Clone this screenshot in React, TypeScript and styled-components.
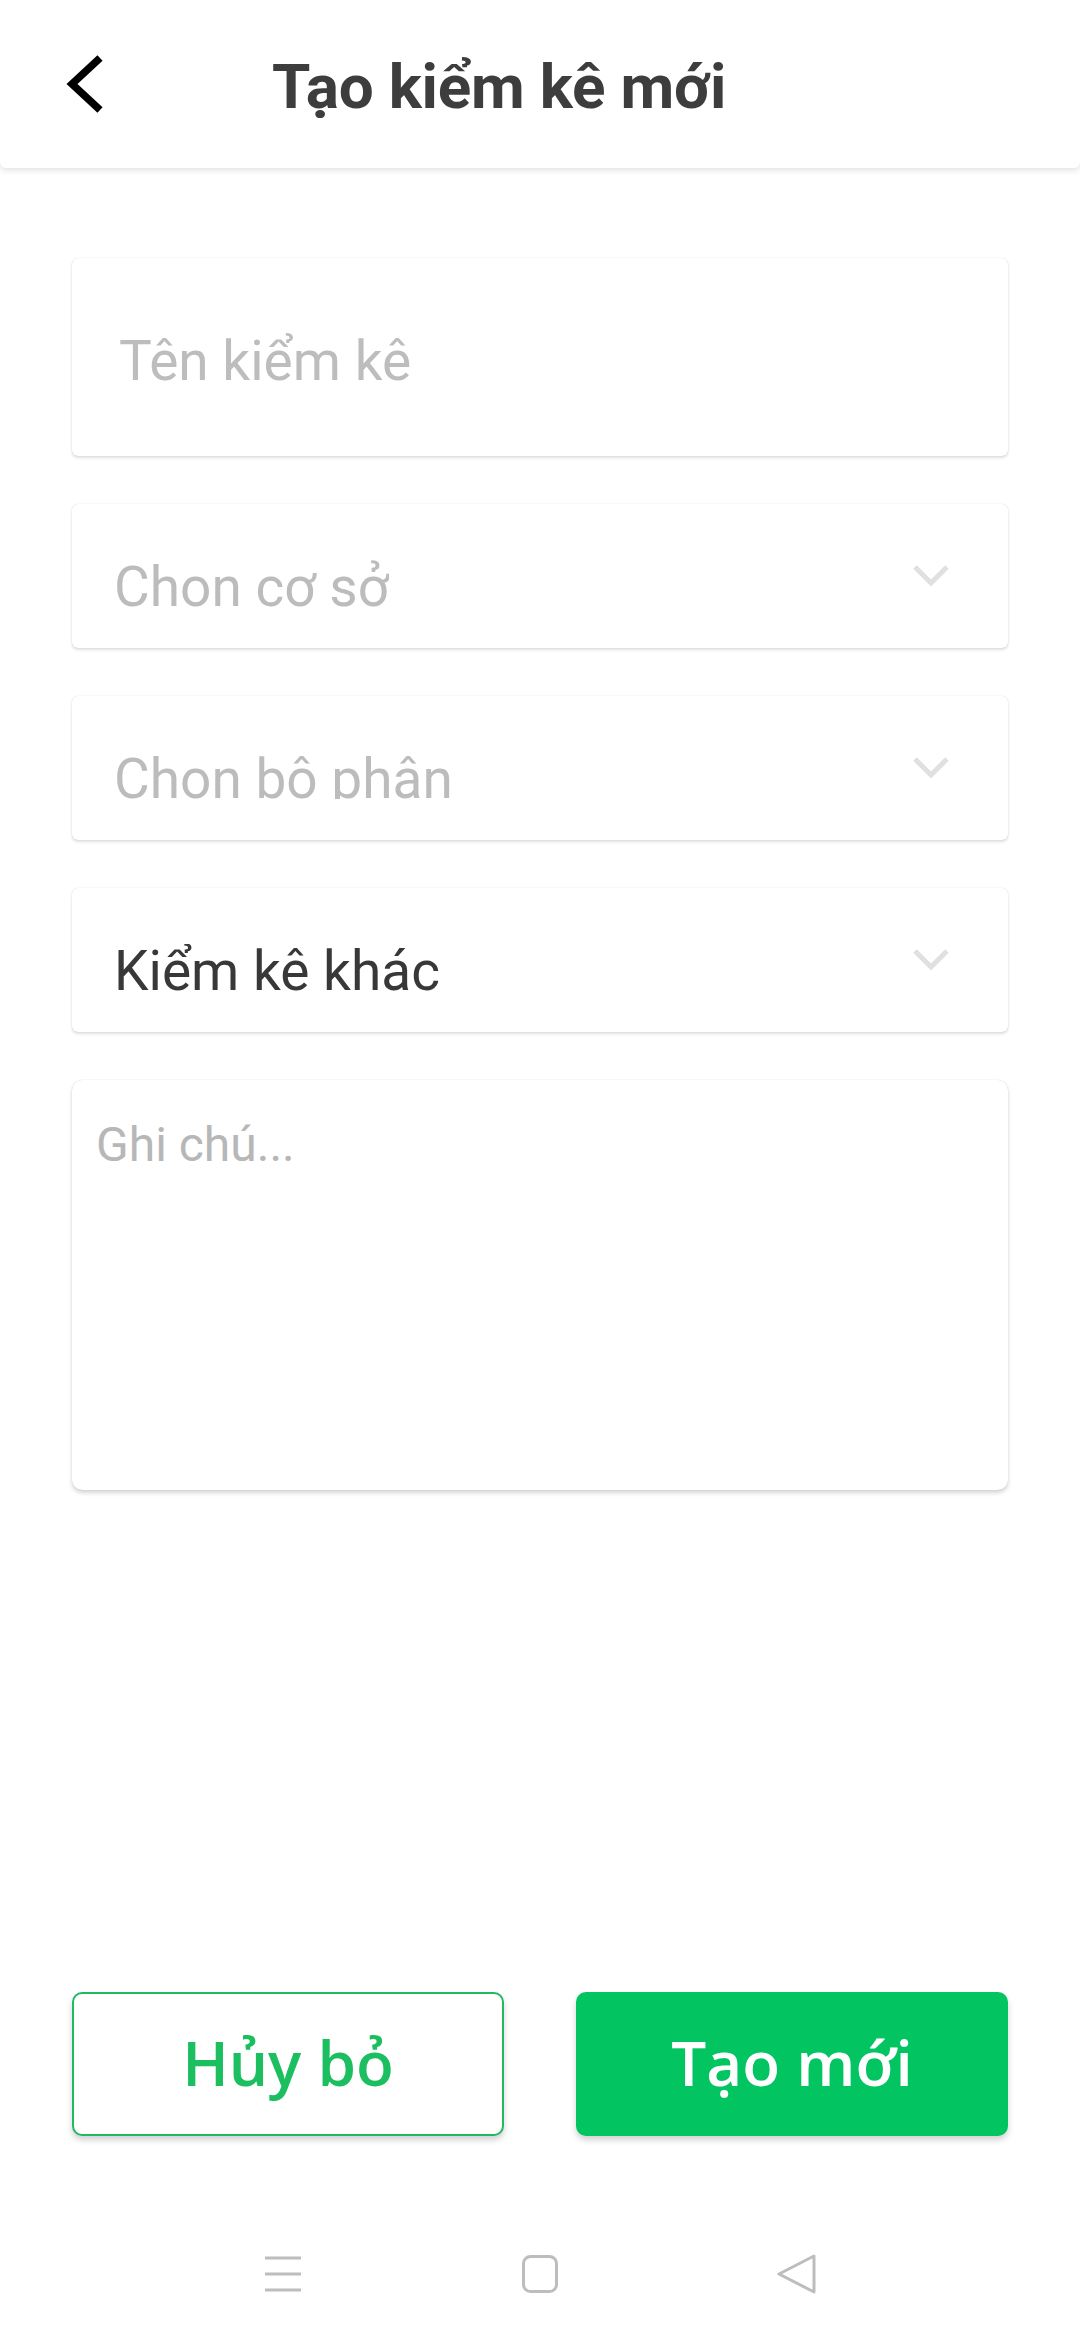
import React from 'react';
import styled, { createGlobalStyle } from 'styled-components';

const GlobalStyle = createGlobalStyle`
  html, body {
    margin: 0;
    padding: 0;
    background: #ffffff;
  }
  * {
    box-sizing: border-box;
  }
`;

const Screen = styled.div`
  width: 1080px;
  height: 2340px;
  display: flex;
  flex-direction: column;
  background: #ffffff;
  font-family: Roboto, 'Noto Sans', sans-serif;
`;

const Header = styled.header`
  height: 168px;
  flex-shrink: 0;
  display: flex;
  align-items: center;
  background: #ffffff;
  border-radius: 0 0 6px 6px;
  box-shadow: 0 2px 6px rgba(0, 0, 0, 0.13);
  position: relative;
  z-index: 1;
`;

const BackButton = styled.button`
  width: 272px;
  height: 168px;
  padding: 0 0 0 64px;
  border: none;
  background: transparent;
  display: flex;
  align-items: center;
  cursor: pointer;
`;

const Title = styled.h1`
  margin: 4px 0 0;
  font-size: 62px;
  font-weight: 700;
  color: #3d3d3d;
  letter-spacing: -0.2px;
`;

const Form = styled.main`
  display: flex;
  flex-direction: column;
  gap: 48px;
  padding: 90px 72px 0;
`;

const fieldShadow = `
  0 0 1px rgba(0, 0, 0, 0.2),
  0 2px 3px rgba(0, 0, 0, 0.12)
`;

const NameInput = styled.input`
  width: 100%;
  height: 198px;
  padding: 7px 40px 0 47px;
  border: none;
  border-radius: 6px;
  background: #ffffff;
  box-shadow: ${fieldShadow};
  font-family: Roboto, sans-serif;
  font-size: 55px;
  color: #3a3a3a;
  outline: none;

  &::placeholder {
    color: #bdbdbd;
  }
`;

const SelectBox = styled.div`
  height: 144px;
  display: flex;
  align-items: center;
  justify-content: space-between;
  padding: 0 57px 0 42px;
  border-radius: 6px;
  background: #ffffff;
  box-shadow: ${fieldShadow};
`;

// the picker row is shorter than the line, so marks under the baseline get cut
const SelectLabel = styled.span<{ $filled?: boolean }>`
  display: block;
  height: 47px;
  margin-top: 15px;
  overflow: hidden;
  font-size: 55px;
  line-height: 55px;
  white-space: nowrap;
  color: ${(p) => (p.$filled ? '#383838' : '#bcbcbc')};
`;

const NoteArea = styled.textarea`
  height: 410px;
  width: 100%;
  padding: 36px 24px;
  border: none;
  border-radius: 10px;
  background: #ffffff;
  box-shadow: 0 0 1px rgba(0, 0, 0, 0.2), 0 3px 4px rgba(0, 0, 0, 0.16);
  font-family: Roboto, sans-serif;
  font-size: 48px;
  color: #3a3a3a;
  resize: none;
  outline: none;

  &::placeholder {
    color: #b7b7b7;
  }
`;

const Spacer = styled.div`
  flex: 1;
`;

const Actions = styled.div`
  display: grid;
  grid-template-columns: 1fr 1fr;
  gap: 72px;
  padding: 0 72px;
  margin-bottom: 72px;
`;

const ActionButton = styled.button<{ $primary?: boolean }>`
  height: 144px;
  border-radius: 10px;
  border: 2px solid ${(p) => (p.$primary ? '#02c461' : '#23b862')};
  background: ${(p) => (p.$primary ? '#02c461' : '#ffffff')};
  color: ${(p) => (p.$primary ? '#ffffff' : '#1cbf5f')};
  box-shadow: 0 4px 6px rgba(0, 0, 0, 0.18);
  font-family: 'Open Sans', 'Noto Sans', sans-serif;
  font-size: 62px;
  font-weight: 600;
  padding: 0 0 4px;
  cursor: pointer;
`;

const NavBar = styled.nav`
  height: 132px;
  flex-shrink: 0;
  display: grid;
  grid-template-columns: repeat(3, 257px);
  justify-content: center;
  justify-items: center;
  align-items: center;
  background: #ffffff;
`;

const ChevronDown = () => (
  <svg width="40" height="26" viewBox="0 0 40 26">
    <polyline
      points="4,4 20,20 36,4"
      fill="none"
      stroke="#e0e0e0"
      strokeWidth="5"
    />
  </svg>
);

const BackIcon = () => (
  <svg width="42" height="60" viewBox="0 0 42 60">
    <polyline
      points="36,4 8,30 36,56"
      fill="none"
      stroke="#000000"
      strokeWidth="7.5"
    />
  </svg>
);

const MenuIcon = () => (
  <svg width="36" height="36" viewBox="0 0 36 36">
    <g stroke="#bdbdbd" strokeWidth="3">
      <line x1="0" y1="2" x2="36" y2="2" />
      <line x1="0" y1="18" x2="36" y2="18" />
      <line x1="0" y1="34" x2="36" y2="34" />
    </g>
  </svg>
);

const HomeIcon = () => (
  <svg width="36" height="38" viewBox="0 0 36 38">
    <rect
      x="1.5"
      y="1.5"
      width="33"
      height="35"
      rx="7"
      fill="none"
      stroke="#bdbdbd"
      strokeWidth="3"
    />
  </svg>
);

const TriangleBackIcon = () => (
  <svg width="40" height="40" viewBox="0 0 40 40">
    <path
      d="M37 2 L37 38 L2 20 Z"
      fill="none"
      stroke="#bdbdbd"
      strokeWidth="3"
      strokeLinejoin="round"
    />
  </svg>
);

const selects = [
  { label: 'Chọn cơ sở', filled: false },
  { label: 'Chọn bộ phận', filled: false },
  { label: 'Kiểm kê khác', filled: true },
];

const App = () => (
  <>
    <GlobalStyle />
    <Screen>
      <Header>
        <BackButton aria-label="Quay lại">
          <BackIcon />
        </BackButton>
        <Title>Tạo kiểm kê mới</Title>
      </Header>

      <Form>
        <NameInput placeholder="Tên kiểm kê" />
        {selects.map((s) => (
          <SelectBox key={s.label}>
            <SelectLabel $filled={s.filled}>{s.label}</SelectLabel>
            <ChevronDown />
          </SelectBox>
        ))}
        <NoteArea placeholder="Ghi chú..." />
      </Form>

      <Spacer />

      <Actions>
        <ActionButton>Hủy bỏ</ActionButton>
        <ActionButton $primary>Tạo mới</ActionButton>
      </Actions>

      <NavBar>
        <MenuIcon />
        <HomeIcon />
        <TriangleBackIcon />
      </NavBar>
    </Screen>
  </>
);

export default App;
